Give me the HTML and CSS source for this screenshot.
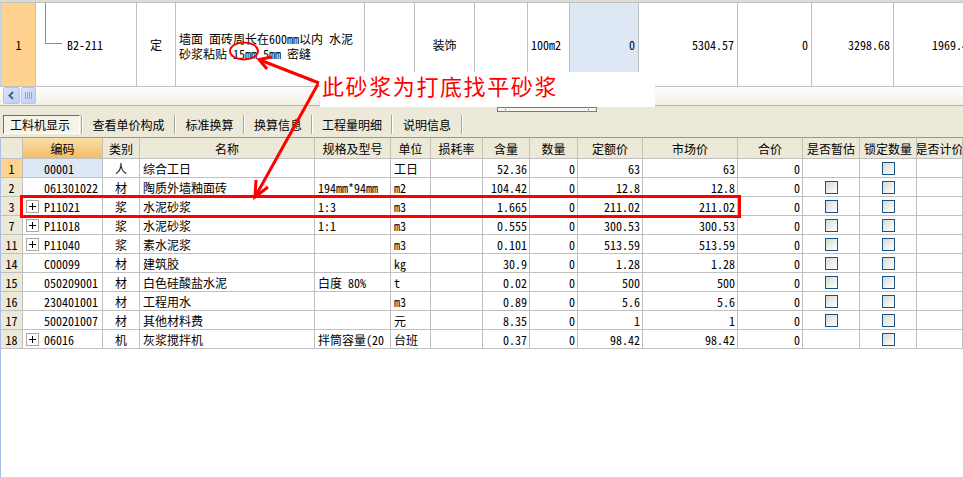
FILE: index.html
```html
<!DOCTYPE html>
<html lang="zh">
<head>
<meta charset="utf-8">
<title>工料机显示</title>
<link rel="stylesheet" href="styles.css">
</head>
<body>
<div class="screen">
  <div class="top-strip"></div>
  <div class="top-row">
    <div class="tc rn-sel center">1</div>
    <div class="tc code"><span class="tree"></span>B2-211</div>
    <div class="tc center">定</div>
    <div class="tc name"><div class="name-txt">墙面 面砖周长在600mm以内 水泥<br>砂浆粘贴 15mm 5mm 密缝</div></div>
    <div class="tc"></div>
    <div class="tc center">装饰</div>
    <div class="tc"></div>
    <div class="tc">100m2</div>
    <div class="tc num sel">0</div>
    <div class="tc num">5304.57</div>
    <div class="tc num">0</div>
    <div class="tc num">3298.68</div>
    <div class="tc num">1969.45</div>
  </div>
  <div class="hscroll">
    <div class="sbtn"><svg width="9" height="9" viewBox="0 0 9 9"><polyline points="6,1 2.5,4.5 6,8" fill="none" stroke="#4D6185" stroke-width="2"/></svg></div>
    <div class="sbtn thumb"><svg width="7" height="7" viewBox="0 0 7 7"><path d="M0.5 0v7M2.5 0v7M4.5 0v7M6.5 0v7" stroke="#8EA5D9" stroke-width="1"/></svg></div>
  </div>
  <div class="splitter"><div class="grip"><span class="dot"></span><span class="dot"></span></div></div>
  <div class="tabs">
    <div class="tab active w1">工料机显示</div>
    <div class="sep"></div>
    <div class="tab w2">查看单价构成</div>
    <div class="sep"></div>
    <div class="tab w3">标准换算</div>
    <div class="sep"></div>
    <div class="tab w4">换算信息</div>
    <div class="sep"></div>
    <div class="tab w5">工程量明细</div>
    <div class="sep"></div>
    <div class="tab w6">说明信息</div>
    <div class="sep"></div>
  </div>
  <div class="grid">
    <div class="row head">
      <div class="hc"></div>
      <div class="hc hsel">编码</div>
      <div class="hc">类别</div>
      <div class="hc">名称</div>
      <div class="hc">规格及型号</div>
      <div class="hc">单位</div>
      <div class="hc">损耗率</div>
      <div class="hc">含量</div>
      <div class="hc">数量</div>
      <div class="hc">定额价</div>
      <div class="hc">市场价</div>
      <div class="hc">合价</div>
      <div class="hc">是否暂估</div>
      <div class="hc">锁定数量</div>
      <div class="hc">是否计价</div>
    </div>

    <div class="row">
      <div class="c rn rn-sel">1</div>
      <div class="c cd cd-sel">00001</div>
      <div class="c center">人</div>
      <div class="c">综合工日</div>
      <div class="c"></div>
      <div class="c">工日</div>
      <div class="c"></div>
      <div class="c num">52.36</div>
      <div class="c num">0</div>
      <div class="c num">63</div>
      <div class="c num">63</div>
      <div class="c num">0</div>
      <div class="c center"></div>
      <div class="c center"><span class="cb"></span></div>
      <div class="c"></div>
    </div>

    <div class="row">
      <div class="c rn">2</div>
      <div class="c cd">061301022</div>
      <div class="c center">材</div>
      <div class="c">陶质外墙釉面砖</div>
      <div class="c">194mm*94mm</div>
      <div class="c">m2</div>
      <div class="c"></div>
      <div class="c num">104.42</div>
      <div class="c num">0</div>
      <div class="c num">12.8</div>
      <div class="c num">12.8</div>
      <div class="c num">0</div>
      <div class="c center"><span class="cb"></span></div>
      <div class="c center"><span class="cb"></span></div>
      <div class="c"></div>
    </div>

    <div class="row">
      <div class="c rn">3</div>
      <div class="c cdp"><span class="plus"></span>P11021</div>
      <div class="c center">浆</div>
      <div class="c">水泥砂浆</div>
      <div class="c">1:3</div>
      <div class="c">m3</div>
      <div class="c"></div>
      <div class="c num">1.665</div>
      <div class="c num">0</div>
      <div class="c num">211.02</div>
      <div class="c num">211.02</div>
      <div class="c num">0</div>
      <div class="c center"><span class="cb"></span></div>
      <div class="c center"><span class="cb"></span></div>
      <div class="c"></div>
    </div>

    <div class="row">
      <div class="c rn">7</div>
      <div class="c cdp"><span class="plus"></span>P11018</div>
      <div class="c center">浆</div>
      <div class="c">水泥砂浆</div>
      <div class="c">1:1</div>
      <div class="c">m3</div>
      <div class="c"></div>
      <div class="c num">0.555</div>
      <div class="c num">0</div>
      <div class="c num">300.53</div>
      <div class="c num">300.53</div>
      <div class="c num">0</div>
      <div class="c center"><span class="cb"></span></div>
      <div class="c center"><span class="cb"></span></div>
      <div class="c"></div>
    </div>

    <div class="row">
      <div class="c rn">11</div>
      <div class="c cdp"><span class="plus"></span>P11040</div>
      <div class="c center">浆</div>
      <div class="c">素水泥浆</div>
      <div class="c"></div>
      <div class="c">m3</div>
      <div class="c"></div>
      <div class="c num">0.101</div>
      <div class="c num">0</div>
      <div class="c num">513.59</div>
      <div class="c num">513.59</div>
      <div class="c num">0</div>
      <div class="c center"><span class="cb"></span></div>
      <div class="c center"><span class="cb"></span></div>
      <div class="c"></div>
    </div>

    <div class="row">
      <div class="c rn">14</div>
      <div class="c cd">C00099</div>
      <div class="c center">材</div>
      <div class="c">建筑胶</div>
      <div class="c"></div>
      <div class="c">kg</div>
      <div class="c"></div>
      <div class="c num">30.9</div>
      <div class="c num">0</div>
      <div class="c num">1.28</div>
      <div class="c num">1.28</div>
      <div class="c num">0</div>
      <div class="c center"><span class="cb"></span></div>
      <div class="c center"><span class="cb"></span></div>
      <div class="c"></div>
    </div>

    <div class="row">
      <div class="c rn">15</div>
      <div class="c cd">050209001</div>
      <div class="c center">材</div>
      <div class="c">白色硅酸盐水泥</div>
      <div class="c">白度 80%</div>
      <div class="c">t</div>
      <div class="c"></div>
      <div class="c num">0.02</div>
      <div class="c num">0</div>
      <div class="c num">500</div>
      <div class="c num">500</div>
      <div class="c num">0</div>
      <div class="c center"><span class="cb"></span></div>
      <div class="c center"><span class="cb"></span></div>
      <div class="c"></div>
    </div>

    <div class="row">
      <div class="c rn">16</div>
      <div class="c cd">230401001</div>
      <div class="c center">材</div>
      <div class="c">工程用水</div>
      <div class="c"></div>
      <div class="c">m3</div>
      <div class="c"></div>
      <div class="c num">0.89</div>
      <div class="c num">0</div>
      <div class="c num">5.6</div>
      <div class="c num">5.6</div>
      <div class="c num">0</div>
      <div class="c center"><span class="cb"></span></div>
      <div class="c center"><span class="cb"></span></div>
      <div class="c"></div>
    </div>

    <div class="row">
      <div class="c rn">17</div>
      <div class="c cd">500201007</div>
      <div class="c center">材</div>
      <div class="c">其他材料费</div>
      <div class="c"></div>
      <div class="c">元</div>
      <div class="c"></div>
      <div class="c num">8.35</div>
      <div class="c num">0</div>
      <div class="c num">1</div>
      <div class="c num">1</div>
      <div class="c num">0</div>
      <div class="c center"><span class="cb"></span></div>
      <div class="c center"><span class="cb"></span></div>
      <div class="c"></div>
    </div>

    <div class="row">
      <div class="c rn">18</div>
      <div class="c cdp"><span class="plus"></span>06016</div>
      <div class="c center">机</div>
      <div class="c">灰浆搅拌机</div>
      <div class="c">拌筒容量(20</div>
      <div class="c">台班</div>
      <div class="c"></div>
      <div class="c num">0.37</div>
      <div class="c num">0</div>
      <div class="c num">98.42</div>
      <div class="c num">98.42</div>
      <div class="c num">0</div>
      <div class="c center"></div>
      <div class="c center"><span class="cb"></span></div>
      <div class="c"></div>
    </div>
  </div>

  <div class="note">此砂浆为打底找平砂浆</div>
  <svg class="marks" width="963" height="477" viewBox="0 0 963 477">
    <ellipse cx="244" cy="51" rx="14" ry="8.5" fill="none" stroke="#FF0000" stroke-width="2"/>
    <line x1="319" y1="83" x2="260" y2="60" stroke="#FF0000" stroke-width="3"/>
    <polyline points="267,69 259,59.5 272,57" fill="none" stroke="#FF0000" stroke-width="3"/>
    <line x1="318" y1="84" x2="255" y2="197" stroke="#FF0000" stroke-width="3"/>
    <polyline points="256,180 255,197 268,187" fill="none" stroke="#FF0000" stroke-width="3"/>
    <rect x="21.5" y="196.5" width="718" height="20" fill="none" stroke="#FF0000" stroke-width="3"/>
  </svg>
</div>
</body>
</html>
```

FILE: styles.css
```css
html, body {
  margin: 0;
  padding: 0;
}
body {
  width: 963px;
  height: 477px;
  overflow: hidden;
  background: #ffffff;
  font-family: "Noto Sans Mono CJK SC", "Noto Sans CJK SC", "Liberation Sans", sans-serif;
  font-size: 12px;
  color: #000;
}
.screen {
  position: relative;
  width: 963px;
  height: 477px;
  display: flex;
  flex-direction: column;
  overflow: hidden;
}

/* ---------- upper pane ---------- */
.top-strip {
  height: 2px;
  background: #DEDCD2;
  flex: none;
}
.top-row {
  flex: none;
  height: 85px;
  box-sizing: border-box;
  border-top: 1px solid #C0C0C0;
  border-bottom: 1px solid #C0C0C0;
  border-left: 2px solid #C3D3EC;
  display: grid;
  grid-template-columns: 34px 101px 39px 189px 50px 60px 53px 42px 69px 99px 74px 82px 84px;
  overflow: hidden;
}
.tc {
  border-right: 1px solid #C0C0C0;
  display: flex;
  align-items: center;
  padding: 0 3px;
  white-space: nowrap;
  overflow: hidden;
  line-height: 15px;
}
.tc.center { justify-content: center; }
.tc.num { justify-content: flex-end; }
.tc.sel { background: #DEE7F4; }
.tc.rn-sel { background: #FFD38F; padding: 0; }
.tc.code { padding-left: 9px; }
.tree {
  align-self: flex-start;
  width: 17px;
  height: 41px;
  box-sizing: border-box;
  border-left: 1px solid #8C8C8C;
  border-bottom: 1px solid #8C8C8C;
  margin-right: 5px;
  flex: none;
}
.name-txt {
  line-height: 15px;
  margin-top: 2px;
}

/* ---------- scroll bar ---------- */
.hscroll {
  flex: none;
  height: 18px;
  display: flex;
  padding-left: 3px;
  gap: 1px;
  background: linear-gradient(#FEFEFD, #F2F0E6);
}
.sbtn {
  width: 17px;
  height: 17px;
  box-sizing: border-box;
  border: 1px solid #B2C6F2;
  border-radius: 2px;
  background: linear-gradient(135deg, #DCE6FD, #BACDF6);
  display: flex;
  align-items: center;
  justify-content: center;
}
.thumb { width: 15px; }

/* ---------- splitter ---------- */
.splitter {
  flex: none;
  height: 7px;
  box-sizing: border-box;
  border-top: 1px solid #A3B3C8;
  background: #ECE9D8;
  display: flex;
}
.grip {
  margin-left: 497px;
  margin-top: 1px;
  width: 100px;
  height: 5px;
  box-sizing: border-box;
  border: 1px solid #7A7A7A;
  background: #F6F5EF;
  display: flex;
  justify-content: space-between;
  padding: 1px 7px;
}
.dot {
  width: 1px;
  height: 1px;
  background: #2E4EC8;
}

/* ---------- tabs ---------- */
.tabs {
  flex: none;
  height: 25px;
  box-sizing: border-box;
  background: #ECE9D8;
  display: flex;
  align-items: flex-start;
  padding: 3px 0 0 3px;
}
.tab {
  height: 19px;
  box-sizing: border-box;
  display: flex;
  align-items: center;
  justify-content: center;
  white-space: nowrap;
  color: #000;
}
.tab.active {
  border: 1px solid;
  border-color: #716F64 #FFFFFF #FFFFFF #716F64;
  background: #F4F3EC;
  padding-right: 3px;
}
.sep {
  width: 1px;
  height: 19px;
  background: #ACA899;
  border-right: 1px solid #FFFFFF;
}
.w1 { width: 77px; margin-right: 1px; }
.w2 { width: 91px; }
.w3 { width: 67px; }
.w4 { width: 66px; }
.w5 { width: 78px; }
.w6 { width: 68px; }

/* ---------- lower grid ---------- */
.grid {
  flex: 1;
  border-left: 1px solid #A9BFE8;
  background: #FFFFFF;
}
.row {
  display: grid;
  grid-template-columns: 22px 80px 37px 175px 76px 40px 52px 47px 48px 65px 95px 65px 57px 57px 46px;
  height: 19px;
  box-sizing: border-box;
  border-bottom: 1px solid #C0C0C0;
}
.row.head {
  height: 22px;
  border-top: 1px solid #8399BA;
  border-bottom: 1px solid #C0C0C0;
  background: #ECE9D8;
}
.hc {
  border-right: 1px solid #C5C2B2;
  display: flex;
  align-items: center;
  justify-content: center;
  white-space: nowrap;
  overflow: hidden;
}
.hc.hsel {
  background: linear-gradient(#FADFA8, #F2BD68);
}
.c {
  border-right: 1px solid #C0C0C0;
  display: flex;
  align-items: center;
  padding: 0 2px 0 3px;
  white-space: nowrap;
  overflow: hidden;
}
.c.center { justify-content: center; padding: 0; }
.c.num { justify-content: flex-end; padding: 0 2px 0 0; }
.c.rn {
  justify-content: center;
  padding: 0;
  background: #ECE9D8;
}
.c.rn-sel { background: #FFD38F; }
.c.cd { padding-left: 21px; }
.c.cd-sel { background: #DEE7F5; }
.plus {
  width: 13px;
  height: 13px;
  box-sizing: border-box;
  border: 1px solid #A6A6A6;
  background: #FFFFFF;
  margin-right: 5px;
  flex: none;
  position: relative;
}
.plus::before,
.plus::after {
  content: "";
  position: absolute;
  background: #000;
}
.plus::before { left: 2px; top: 5px; width: 7px; height: 1px; }
.plus::after { left: 5px; top: 2px; width: 1px; height: 7px; }
.cb {
  width: 13px;
  height: 13px;
  box-sizing: border-box;
  border: 1px solid #1C5180;
  background: linear-gradient(135deg, #D9D9D3, #FFFFFF);
}

/* ---------- annotations ---------- */
.note {
  position: absolute;
  left: 320px;
  top: 72px;
  width: 335px;
  height: 35px;
  box-sizing: border-box;
  padding-left: 2px;
  background: #FFFFFF;
  color: #FF0000;
  font-family: "Noto Sans CJK SC", sans-serif;
  font-size: 22px;
  line-height: 26px;
  letter-spacing: 1.6px;
  white-space: nowrap;
}
.marks {
  position: absolute;
  left: 0;
  top: 0;
  pointer-events: none;
}
```
